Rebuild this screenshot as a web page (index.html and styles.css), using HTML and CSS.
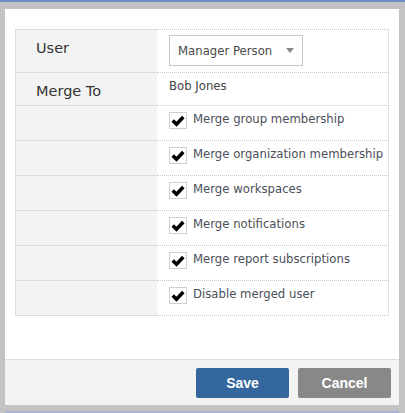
FILE: index.html
```html
<!DOCTYPE html>
<html>
<head>
<meta charset="utf-8">
<link rel="stylesheet" href="styles.css">
</head>
<body>
<div class="dialog">
  <div class="content">
    <div class="form">
      <div class="label">User</div>
      <div class="value">
        <div class="select"><span>Manager Person</span><span class="caret"></span></div>
      </div>
      <div class="label">Merge To</div>
      <div class="value text">Bob Jones</div>

      <div class="label row"></div>
      <div class="value row"><span class="cb"><svg viewBox="0 0 17 17"><path d="M2.5 8.5 L6.8 12.8 L14.5 4.5" fill="none" stroke="#000" stroke-width="4" stroke-linejoin="miter" stroke-linecap="butt"/></svg></span><span class="cbl">Merge group membership</span></div>

      <div class="label row"></div>
      <div class="value row"><span class="cb"><svg viewBox="0 0 17 17"><path d="M2.5 8.5 L6.8 12.8 L14.5 4.5" fill="none" stroke="#000" stroke-width="4" stroke-linejoin="miter" stroke-linecap="butt"/></svg></span><span class="cbl">Merge organization membership</span></div>

      <div class="label row"></div>
      <div class="value row"><span class="cb"><svg viewBox="0 0 17 17"><path d="M2.5 8.5 L6.8 12.8 L14.5 4.5" fill="none" stroke="#000" stroke-width="4" stroke-linejoin="miter" stroke-linecap="butt"/></svg></span><span class="cbl">Merge workspaces</span></div>

      <div class="label row"></div>
      <div class="value row"><span class="cb"><svg viewBox="0 0 17 17"><path d="M2.5 8.5 L6.8 12.8 L14.5 4.5" fill="none" stroke="#000" stroke-width="4" stroke-linejoin="miter" stroke-linecap="butt"/></svg></span><span class="cbl">Merge notifications</span></div>

      <div class="label row"></div>
      <div class="value row"><span class="cb"><svg viewBox="0 0 17 17"><path d="M2.5 8.5 L6.8 12.8 L14.5 4.5" fill="none" stroke="#000" stroke-width="4" stroke-linejoin="miter" stroke-linecap="butt"/></svg></span><span class="cbl">Merge report subscriptions</span></div>

      <div class="label row"></div>
      <div class="value row"><span class="cb"><svg viewBox="0 0 17 17"><path d="M2.5 8.5 L6.8 12.8 L14.5 4.5" fill="none" stroke="#000" stroke-width="4" stroke-linejoin="miter" stroke-linecap="butt"/></svg></span><span class="cbl">Disable merged user</span></div>
    </div>
  </div>
  <div class="footer">
    <button class="btn save">Save</button>
    <button class="btn cancel">Cancel</button>
  </div>
</div>
</body>
</html>
```

FILE: styles.css
```css
html, body {
  margin: 0;
  padding: 0;
}
body {
  background: #c3c3c3;
  border-top: 2px solid #6d8dc9;
  height: 413px;
  box-sizing: border-box;
  font-family: "DejaVu Sans", Verdana, sans-serif;
  overflow: hidden;
}
.dialog {
  margin: 7px 6px 0 5px;
  background: #fff;
  border-bottom: 6px solid #c3c3c3;
  box-shadow: 0 6px 0 0 #a9b6d3;
}
.content {
  height: 350px;
  padding: 20px 10px 0 10px;
  box-sizing: border-box;
}
.form {
  display: grid;
  grid-template-columns: 142px 1fr;
  grid-template-rows: 44px 33px repeat(6, 35px);
}
.label {
  background: #f3f3f3;
  border-left: 1px solid #dcdcdc;
  border-bottom: 1px solid #dcdcdc;
  font-size: 14.5px;
  color: #333;
  padding: 10px 0 0 20px;
  box-sizing: border-box;
}
.form > .label:first-child {
  border-top: 1px solid #dcdcdc;
  padding-top: 10px;
}
.value {
  border-right: 1px dotted #c8c8c8;
  border-bottom: 1px dotted #c8c8c8;
  padding: 5px 0 0 12px;
  box-sizing: border-box;
  font-size: 11.7px;
  color: #444;
}
.form > .value:nth-child(2) {
  border-top: 1px dotted #c8c8c8;
}
.value.text {
  padding-top: 6px;
}
.select {
  width: 134px;
  height: 31px;
  box-sizing: border-box;
  border: 1px solid #c8c8c8;
  display: flex;
  align-items: center;
  justify-content: space-between;
  padding: 0 8px 0 8px;
  color: #4a4a4a;
}
.caret {
  width: 0;
  height: 0;
  border-left: 4px solid transparent;
  border-right: 4px solid transparent;
  border-top: 5px solid #8a8a8a;
}
.value.row {
  display: flex;
  align-items: flex-start;
  padding-top: 6px;
}
.cb {
  width: 18px;
  height: 17px;
  box-sizing: border-box;
  border: 1px solid #cfcfcf;
  display: flex;
  align-items: center;
  justify-content: center;
  background: #fff;
  flex: none;
}
.cb svg {
  width: 16px;
  height: 15px;
}
.cbl {
  margin-left: 6px;
  line-height: 15px;
  color: #4a4f5a;
}
.footer {
  height: 46px;
  box-sizing: border-box;
  border-top: 1px solid #dcdcdc;
  background: #f3f3f3;
  display: flex;
  justify-content: flex-end;
  align-items: flex-start;
  padding: 8px 8px 0 0;
  gap: 9px;
}
.btn {
  width: 93px;
  height: 30px;
  border: none;
  border-radius: 2px;
  color: #fff;
  font-family: "Liberation Sans", Arial, sans-serif;
  font-weight: bold;
  font-size: 14px;
  padding: 0;
}
.save {
  background: #34679d;
}
.cancel {
  background: #888888;
}
```
